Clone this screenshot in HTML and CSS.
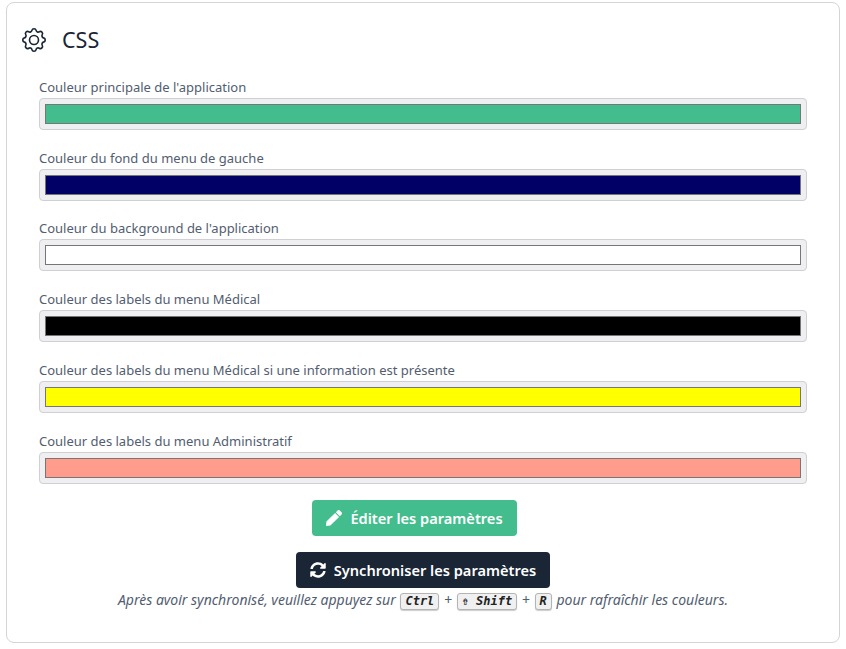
FILE: index.html
```html
<!DOCTYPE html>
<html lang="fr">
<head>
<meta charset="utf-8">
<title>CSS</title>
<link rel="stylesheet" href="styles.css">
</head>
<body>
<main class="card">
  <h1 class="title">
    <svg class="gear" viewBox="0 0 24 24" fill="none" stroke="currentColor" stroke-width="1.3" stroke-linecap="round" stroke-linejoin="round"><path d="M10.33 4.32c.43-1.76 2.92-1.76 3.35 0a1.72 1.72 0 0 0 2.57 1.07c1.54-.94 3.3.82 2.36 2.37a1.72 1.72 0 0 0 1.06 2.56c1.76.43 1.76 2.93 0 3.36a1.72 1.72 0 0 0-1.07 2.56c.94 1.54-.82 3.3-2.36 2.36a1.72 1.72 0 0 0-2.57 1.07c-.43 1.75-2.92 1.75-3.35 0a1.72 1.72 0 0 0-2.57-1.07c-1.54.94-3.3-.82-2.36-2.36a1.72 1.72 0 0 0-1.07-2.57c-1.75-.42-1.75-2.92 0-3.35a1.72 1.72 0 0 0 1.07-2.57c-.94-1.54.82-3.3 2.36-2.36 1 .6 2.3.07 2.57-1.07z"/><circle cx="12" cy="12" r="3.6"/></svg>
    <span class="title-text">CSS</span>
  </h1>
  <form class="fields">
    <div class="field"><label for="c1">Couleur principale de l'application</label><input id="c1" type="color" value="#43bd8d"></div>
    <div class="field"><label for="c2">Couleur du fond du menu de gauche</label><input id="c2" type="color" value="#000066"></div>
    <div class="field"><label for="c3">Couleur du background de l'application</label><input id="c3" type="color" value="#ffffff"></div>
    <div class="field"><label for="c4">Couleur des labels du menu Médical</label><input id="c4" type="color" value="#000000"></div>
    <div class="field"><label for="c5">Couleur des labels du menu Médical si une information est présente</label><input id="c5" type="color" value="#ffff00"></div>
    <div class="field"><label for="c6">Couleur des labels du menu Administratif</label><input id="c6" type="color" value="#ff9c8c"></div>
  </form>
  <div class="actions">
    <button class="btn btn-green" type="button">
      <svg class="ico" viewBox="0 0 512 512" fill="currentColor"><path d="M290.74 93.24l128.02 128.02-277.99 277.99-114.14 12.6C11.35 513.54-1.56 500.62.14 485.34l12.7-114.22 277.9-277.88zm207.2-19.06l-60.11-60.11c-18.75-18.75-49.16-18.75-67.91 0l-56.55 56.55 128.02 128.02 56.55-56.55c18.75-18.76 18.75-49.16 0-67.91z"/></svg>
      Éditer les paramètres
    </button>
    <button class="btn btn-dark" type="button">
      <svg class="ico" viewBox="0 0 512 512" fill="currentColor"><path d="M370.72 133.28C339.46 104.02 298.8 88 255.7 88c-77.5.07-144.43 53.2-162.9 126.93-1.35 5.37-6.13 9.07-11.66 9.07H24.06c-7.47 0-13.15-6.78-11.77-14.12C33.88 95.26 134.93 8 256 8c66.38 0 126.67 26.1 171.2 68.6L463.03 40.8C478.15 25.68 504 36.38 504 57.76V192c0 13.25-10.75 24-24 24H345.76c-21.38 0-32.08-25.85-16.97-40.97l41.93-41.75zM32 296h134.24c21.38 0 32.08 25.85 16.97 40.97l-41.93 41.75c31.26 29.27 71.92 45.28 115.02 45.28 77.46-.07 144.42-53.17 162.9-126.93 1.35-5.37 6.13-9.07 11.66-9.07h57.08c7.47 0 13.15 6.78 11.77 14.12C478.12 416.74 377.07 504 256 504c-66.38 0-126.67-26.1-171.2-68.6l-35.83 35.8C33.85 486.32 8 475.62 8 454.24V320c0-13.25 10.75-24 24-24z"/></svg>
      Synchroniser les paramètres
    </button>
    <p class="hint">Après avoir synchronisé, veuillez appuyez sur <kbd>Ctrl</kbd> + <kbd>⇮ Shift</kbd> + <kbd>R</kbd> pour rafraîchir les couleurs.</p>
  </div>
</main>
</body>
</html>
```
FILE: styles.css
```css
* { box-sizing: border-box; }
html, body { margin: 0; height: 100%; background: #fff; }
body {
  padding: 2px 6px 6px;
  font-family: "Noto Sans", "Open Sans", sans-serif;
  font-size: 13px;
  color: #525d70;
  overflow: hidden;
}
.card {
  height: 641px;
  border: 1px solid #d5d5d8;
  border-radius: 8px;
  background: #fff;
  padding: 21px 32px 0;
}
.title {
  display: flex;
  align-items: center;
  gap: 13px;
  margin: 0 0 0 -20px;
  height: 32px;
  font-size: 21.5px;
  font-weight: 400;
  color: #1a2535;
}
.title-text { margin-bottom: 2px; }
.gear { width: 30px; height: 30px; flex: none; }
.fields { margin-top: 20.8px; display: flex; flex-direction: column; }
.field { height: 70.8px; display: flex; flex-direction: column; }
.field label { height: 21px; line-height: 21px; }
.field input {
  appearance: none;
  -webkit-appearance: none;
  width: 768px;
  height: 32px;
  padding: 5px;
  margin: 0;
  background: #efeff2;
  border: 1px solid #cfcfd4;
  border-radius: 4px;
}
.field input::-webkit-color-swatch-wrapper { padding: 0; }
.field input::-webkit-color-swatch { border: 1px solid #767676; border-radius: 0; }
.actions { display: flex; flex-direction: column; align-items: center; margin-top: -2px; }
.btn {
  display: flex;
  align-items: center;
  gap: 8px;
  height: 36px;
  padding: 0 14px;
  border: 0;
  border-radius: 4px;
  font: 600 14.6px "Noto Sans", "Open Sans", sans-serif;
  color: #fff;
}
.btn-green { background: #43bd8d; margin-right: 17px; }
.btn-dark { background: #1a2535; margin-top: 16px; }
.ico { width: 16px; height: 16px; flex: none; }
.hint { margin: 2px 0 0; font-size: 14px; font-style: italic; line-height: 20px; white-space: nowrap; color: #525d70; }
kbd {
  display: inline-block;
  margin: 0 1px;
  padding: 0 4px;
  font: italic 700 12px/15px "DejaVu Sans Mono", monospace;
  color: #222;
  background: #f0f0f0;
  border: 1px solid #b4b4b4;
  border-radius: 3px;
  box-shadow: 0 1px 1px rgba(0,0,0,.2);
}
```
